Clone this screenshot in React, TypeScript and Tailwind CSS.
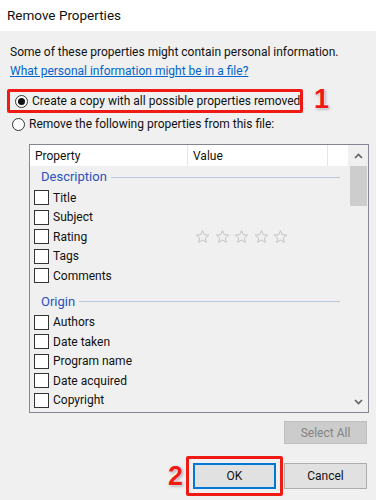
import React from "react";

const font = "font-['Roboto','Noto_Sans',sans-serif]";

const Radio = ({ checked }: { checked?: boolean }) => (
  <span className="flex h-[13px] w-[13px] shrink-0 items-center justify-center rounded-full border border-[#333] bg-white">
    {checked && <span className="h-[7px] w-[7px] rounded-full bg-[#111]" />}
  </span>
);

const Check = ({ label }: { label: string }) => (
  <div className="flex h-[19.5px] items-center gap-[4px] pl-[4px]">
    <span className="h-[15px] w-[15px] shrink-0 border border-[#333] bg-white" />
    <span>{label}</span>
  </div>
);

const Group = ({ title }: { title: string }) => (
  <div className="flex h-[22px] items-center gap-[4px] pl-[11px] pr-[8px] text-[13px] text-[#2a52be]">
    <span>{title}</span>
    <span className="h-px flex-1 bg-[#b9c9dc]" />
  </div>
);

const Star = () => (
  <svg width="15" height="15" viewBox="0 0 24 24">
    <path
      d="M12 2.5l2.8 6.6 7.1.6-5.4 4.7 1.6 7-6.1-3.7-6.1 3.7 1.6-7-5.4-4.7 7.1-.6z"
      fill="none"
      stroke="#c4c4c4"
      strokeWidth="1.6"
      strokeLinejoin="round"
    />
  </svg>
);

const Badge = ({ n }: { n: string }) => (
  <span className="font-['Liberation_Sans',Arial,sans-serif] text-[27px] font-bold leading-none text-[#f01a14] [text-shadow:0_0_2px_#fff,0_0_2px_#fff,1px_1px_3px_rgba(0,0,0,0.45)]">
    {n}
  </span>
);

export default function App() {
  return (
    <div className={`flex h-[500px] w-[376px] flex-col overflow-hidden whitespace-nowrap bg-[#f0f0f0] text-[12px] text-[#111] ${font}`}>
      <div className="flex h-[31px] shrink-0 items-center bg-white pl-[7px] text-[13.5px]">
        Remove Properties
      </div>

      <div className="flex flex-1 flex-col pt-[12px]">
        <p className="pl-[10px] leading-[19px]">
          Some of these properties might contain personal information.
        </p>
        <a className="pl-[10px] leading-[19px] text-[#0066cc] underline">
          What personal information might be in a file?
        </a>

        {/* options */}
        <div className="relative ml-[7px] mt-[8px] w-fit">
          <div className="flex h-[24px] w-[296px] items-center gap-[4px] rounded-[2px] border-[3px] border-[#f01a14] pl-[5px]">
            <Radio checked />
            <span>Create a copy with all possible properties removed</span>
          </div>
          <span className="absolute left-[307px] top-[-3px]">
            <Badge n="1" />
          </span>
        </div>
        <div className="ml-[12px] flex h-[22px] items-center gap-[4px]">
          <Radio />
          <span>Remove the following properties from this file:</span>
        </div>

        {/* property list */}
        <div className="ml-[29px] mt-[9px] flex h-[269px] w-[340px] shrink-0 border border-[#828790]">
          <div className="flex flex-1 flex-col">
            <div className="flex h-[21px] shrink-0 bg-white">
              <span className="flex w-[158px] items-center border-r border-[#e5e5e5] pl-[5px]">
                Property
              </span>
              <span className="flex w-[140px] items-center border-r border-[#e5e5e5] pl-[5px]">
                Value
              </span>
              <span className="flex-1" />
            </div>
            <Group title="Description" />
            <Check label="Title" />
            <Check label="Subject" />
            <div className="flex h-[19.5px] items-center">
              <div className="w-[158px]">
                <Check label="Rating" />
              </div>
              <div className="flex gap-[4.5px] pl-[7px]">
                <Star />
                <Star />
                <Star />
                <Star />
                <Star />
              </div>
            </div>
            <Check label="Tags" />
            <Check label="Comments" />
            <div className="mt-[5px]" />
            <Group title="Origin" />
            <Check label="Authors" />
            <Check label="Date taken" />
            <Check label="Program name" />
            <Check label="Date acquired" />
            <Check label="Copyright" />
          </div>

          {/* scrollbar */}
          <div className="flex w-[20px] shrink-0 flex-col items-center bg-[#f0f0f0]">
            <div className="flex h-[21px] items-center justify-center">
              <svg width="9" height="6" viewBox="0 0 9 6">
                <path d="M1 5L4.5 1.5L8 5" fill="none" stroke="#606060" strokeWidth="1.6" />
              </svg>
            </div>
            <div className="h-[40px] w-[17px] bg-[#cdcdcd]" />
            <div className="flex-1" />
            <div className="flex h-[21px] items-center justify-center">
              <svg width="9" height="6" viewBox="0 0 9 6">
                <path d="M1 1L4.5 4.5L8 1" fill="none" stroke="#606060" strokeWidth="1.6" />
              </svg>
            </div>
          </div>
        </div>

        <div className="mr-[9px] mt-[8px] flex justify-end">
          <div className="flex h-[23px] w-[83px] items-center justify-center border border-[#bfbfbf] bg-[#cccccc] text-[#838383]">
            Select All
          </div>
        </div>

        <div className="mr-[9px] mt-[12px] flex items-center justify-end">
          <Badge n="2" />
          <div className="ml-[3px] rounded-[2px] border-[3px] border-[#f01a14] p-[4px]">
            <div className="flex h-[26px] w-[83px] items-center justify-center border-2 border-[#0078d7] bg-[#e1e1e1]">
              OK
            </div>
          </div>
          <div className="ml-px flex h-[26px] w-[83px] items-center justify-center border border-[#adadad] bg-[#e1e1e1]">
            Cancel
          </div>
        </div>
      </div>
    </div>
  );
}
